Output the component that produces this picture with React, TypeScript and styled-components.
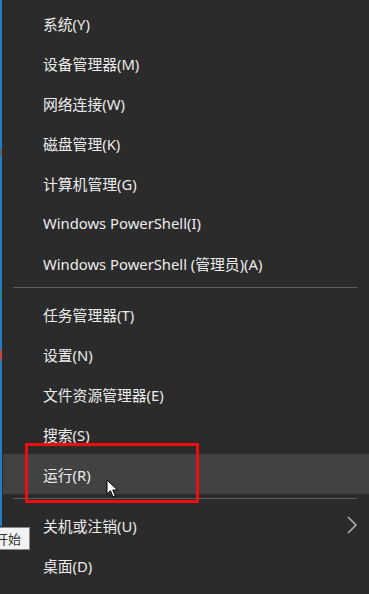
import React from "react";
import styled, { createGlobalStyle } from "styled-components";

const Global = createGlobalStyle`
  html, body { margin: 0; padding: 0; background: #2b2b2b; }
  body { font-family: "Noto Sans", "Noto Sans CJK SC", sans-serif; }
`;

const Menu = styled.div`
  position: relative;
  width: 369px;
  height: 594px;
  background: #2b2b2b;
  box-sizing: border-box;
  padding-top: 3px;
  display: flex;
  flex-direction: column;
  overflow: hidden;
  &::before {
    content: "";
    position: absolute;
    left: 0;
    top: 0;
    width: 2px;
    height: 526px;
    background: linear-gradient(
      #1f7fc4 0%, #1f7fc4 28%, #6a5a48 29%, #1f7fc4 30%, #1f7fc4 55%,
      #2a8a7a 56%, #1f7fc4 57%, #1f7fc4 66%, #c44a3a 67%, #c44a3a 68%,
      #1f7fc4 69%, #1f7fc4 100%
    );
  }
`;

const Item = styled.div<{ $active?: boolean }>`
  height: 40px;
  flex: 0 0 40px;
  display: flex;
  align-items: center;
  justify-content: space-between;
  padding-right: 11px;
  margin-left: ${(p) => (p.$active ? "3px" : "0")};
  padding-left: ${(p) => (p.$active ? "40px" : "43px")};
  background: ${(p) => (p.$active ? "#424242" : "transparent")};
  color: #ececec;
  font-size: 14.8px;
  white-space: nowrap;
  position: relative;
`;

const Separator = styled.div`
  height: 1px;
  flex: 0 0 1px;
  margin: 4px 12px 6px 13px;
  background: #5c5c5c;
`;

const Chevron = styled.svg`
  width: 12px;
  height: 20px;
`;

const Highlight = styled.div`
  position: absolute;
  left: 25px;
  top: 443px;
  width: 174px;
  height: 60px;
  box-sizing: border-box;
  border: 3px solid #f00d0d;
  pointer-events: none;
`;

const Cursor = styled.svg`
  position: absolute;
  left: 106px;
  top: 479px;
  width: 13px;
  height: 20px;
`;

const Tooltip = styled.div`
  position: absolute;
  left: -8px;
  top: 527px;
  width: 38px;
  height: 23px;
  box-sizing: border-box;
  background: #f2f2f2;
  border: 1px solid #8a8a8a;
  color: #333;
  font-family: "Noto Sans CJK SC", sans-serif;
  font-size: 13px;
  line-height: 21px;
  padding-left: 2px;
  overflow: hidden;
  white-space: nowrap;
`;

const group1 = [
  "系统(Y)",
  "设备管理器(M)",
  "网络连接(W)",
  "磁盘管理(K)",
  "计算机管理(G)",
  "Windows PowerShell(I)",
  "Windows PowerShell (管理员)(A)",
];

const group2 = ["任务管理器(T)", "设置(N)", "文件资源管理器(E)", "搜索(S)"];

export default function App() {
  return (
    <>
      <Global />
      <Menu>
        {group1.map((t) => (
          <Item key={t}>{t}</Item>
        ))}
        <Separator />
        {group2.map((t) => (
          <Item key={t}>{t}</Item>
        ))}
        <Item $active>运行(R)</Item>
        <Separator />
        <Item>
          关机或注销(U)
          <Chevron viewBox="0 0 12 20">
            <path d="M2 2 L10 10 L2 18" fill="none" stroke="#b0b0b0" strokeWidth="1.6" />
          </Chevron>
        </Item>
        <Item>桌面(D)</Item>
        <Highlight />
        <Cursor viewBox="0 0 13 20">
          <path
            d="M1 1 L1 15 L4.5 11.8 L7 18 L9.3 17 L6.8 11 L11.5 11 Z"
            fill="#ffffff"
            stroke="#000000"
            strokeWidth="1"
            strokeLinejoin="round"
          />
        </Cursor>
        <Tooltip>开始</Tooltip>
      </Menu>
    </>
  );
}
